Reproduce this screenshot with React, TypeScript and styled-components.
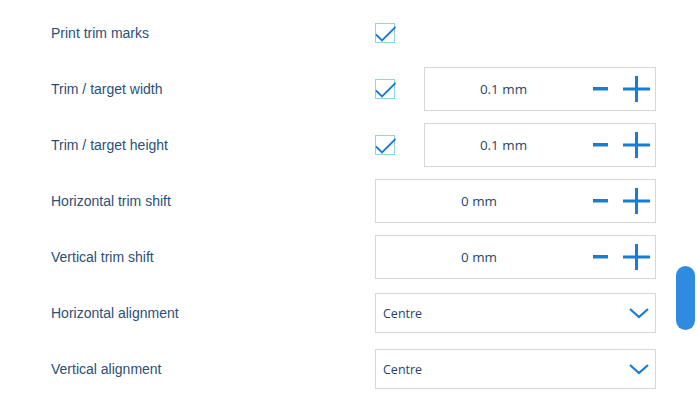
import styled, { createGlobalStyle } from 'styled-components'

const GlobalStyle = createGlobalStyle`
  html, body {
    margin: 0;
    padding: 0;
    background: #ffffff;
  }
  body {
    font-family: "Liberation Sans", Arial, sans-serif;
    overflow: hidden;
  }
`

const Page = styled.div`
  position: relative;
  width: 697px;
  height: 402px;
  background: #fff;
`

const Settings = styled.div`
  display: flex;
  flex-direction: column;
  padding: 5px 0 0 51px;
`

const Row = styled.div`
  display: grid;
  grid-template-columns: 324px 281px;
  align-items: center;
  height: 56px;
`

const Label = styled.div`
  font-size: 14px;
  color: #2a5078;
`

const Control = styled.div`
  display: flex;
  align-items: center;
  gap: 29px;
`

const Check = styled.div`
  width: 18px;
  height: 18px;
  flex: none;
  border: 1px solid #8fd3e6;
  position: relative;

  svg {
    position: absolute;
    left: -1px;
    top: -4px;
  }
`

const Stepper = styled.div`
  flex: 1;
  height: 42px;
  border: 1px solid #d7d7d7;
  display: flex;
  align-items: center;
  padding-right: 5px;
`

const Value = styled.div`
  flex: 1;
  text-align: center;
  padding-right: 11px;
  font-family: "Open Sans", "Noto Sans", sans-serif;
  font-size: 13.4px;
  color: #24466b;
`

const StepButton = styled.button<{ $gap?: number }>`
  border: none;
  background: none;
  padding: 0;
  margin: 0 ${p => p.$gap ?? 0}px 0 0;
  display: flex;
  align-items: center;
  justify-content: center;
  cursor: pointer;
`

const Select = styled.div`
  height: 40px;
  border: 1px solid #d7d7d7;
  display: flex;
  align-items: center;
  justify-content: space-between;
  padding: 0 5px 0 7px;
  font-family: "Open Sans", "Noto Sans", sans-serif;
  font-size: 12.5px;
  color: #24466b;
  width: 100%;
  box-sizing: border-box;
`

const ScrollThumb = styled.div`
  position: absolute;
  left: 676px;
  top: 266px;
  width: 19px;
  height: 64px;
  border-radius: 10px;
  background: #2e8be0;
`

const blue = '#1a7bd3'

function Checkbox() {
  return (
    <Check>
      <svg width="22" height="24" viewBox="0 0 22 24">
        <polyline points="1,14.5 7,20.5 20.5,7" fill="none" stroke={blue} strokeWidth="1.8" />
      </svg>
    </Check>
  )
}

function NumberField({ value }: { value: string }) {
  return (
    <Stepper>
      <Value>{value}</Value>
      <StepButton aria-label="decrease" $gap={15}>
        <svg width="15" height="4" viewBox="0 0 15 4">
          <rect x="0" y="0" width="15" height="3.5" fill={blue} />
        </svg>
      </StepButton>
      <StepButton aria-label="increase">
        <svg width="27" height="26" viewBox="0 0 27 26">
          <rect x="0" y="11.5" width="27" height="3" fill={blue} />
          <rect x="12" y="0" width="3" height="26" fill={blue} />
        </svg>
      </StepButton>
    </Stepper>
  )
}

function Dropdown({ value }: { value: string }) {
  return (
    <Select>
      <span>{value}</span>
      <svg width="22" height="12" viewBox="0 0 22 12">
        <polyline points="2,2 11,10 20,2" fill="none" stroke={blue} strokeWidth="2.2" />
      </svg>
    </Select>
  )
}

export default function App() {
  return (
    <Page>
      <GlobalStyle />
      <Settings>
        <Row>
          <Label>Print trim marks</Label>
          <Control>
            <Checkbox />
          </Control>
        </Row>
        <Row>
          <Label>Trim / target width</Label>
          <Control>
            <Checkbox />
            <NumberField value="0.1 mm" />
          </Control>
        </Row>
        <Row>
          <Label>Trim / target height</Label>
          <Control>
            <Checkbox />
            <NumberField value="0.1 mm" />
          </Control>
        </Row>
        <Row>
          <Label>Horizontal trim shift</Label>
          <Control>
            <NumberField value="0 mm" />
          </Control>
        </Row>
        <Row>
          <Label>Vertical trim shift</Label>
          <Control>
            <NumberField value="0 mm" />
          </Control>
        </Row>
        <Row>
          <Label>Horizontal alignment</Label>
          <Control>
            <Dropdown value="Centre" />
          </Control>
        </Row>
        <Row>
          <Label>Vertical alignment</Label>
          <Control>
            <Dropdown value="Centre" />
          </Control>
        </Row>
      </Settings>
      <ScrollThumb />
    </Page>
  )
}
